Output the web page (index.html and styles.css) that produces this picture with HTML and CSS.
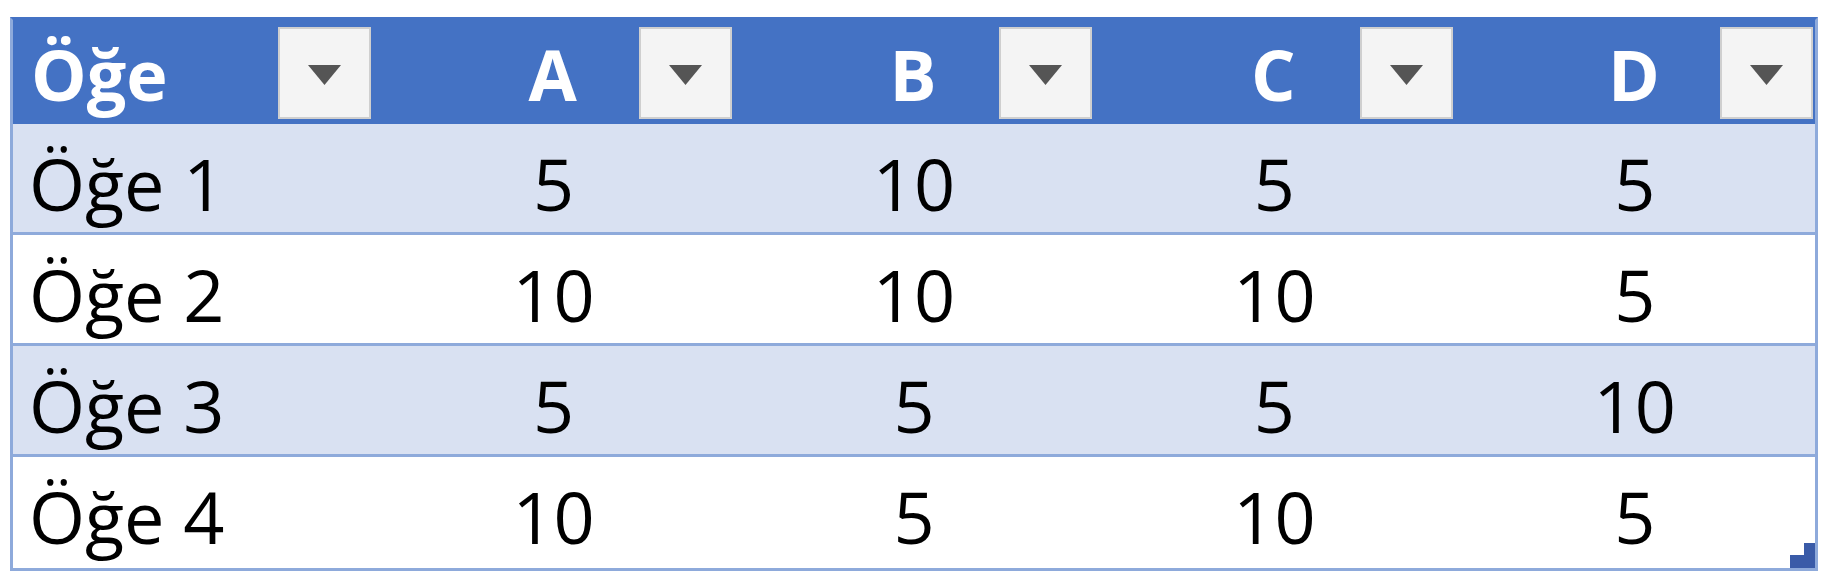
FILE: index.html
```html
<!DOCTYPE html>
<html lang="tr">
<head>
<meta charset="utf-8">
<title>Tablo</title>
<link rel="stylesheet" href="styles.css">
</head>
<body>
<div class="table">
  <div class="row head">
    <div class="hcell first"><span class="htext">Öğe</span><span class="drop"><svg viewBox="0 0 33 20" width="33" height="20"><polygon points="0,0 33,0 16.5,20" fill="#555"/></svg></span></div>
    <div class="hcell"><span></span><span class="htext">A</span><span class="drop"><svg viewBox="0 0 33 20" width="33" height="20"><polygon points="0,0 33,0 16.5,20" fill="#555"/></svg></span></div>
    <div class="hcell"><span></span><span class="htext">B</span><span class="drop"><svg viewBox="0 0 33 20" width="33" height="20"><polygon points="0,0 33,0 16.5,20" fill="#555"/></svg></span></div>
    <div class="hcell"><span></span><span class="htext">C</span><span class="drop"><svg viewBox="0 0 33 20" width="33" height="20"><polygon points="0,0 33,0 16.5,20" fill="#555"/></svg></span></div>
    <div class="hcell"><span></span><span class="htext">D</span><span class="drop"><svg viewBox="0 0 33 20" width="33" height="20"><polygon points="0,0 33,0 16.5,20" fill="#555"/></svg></span></div>
  </div>
  <div class="row band">
    <div class="cell name">Öğe 1</div><div class="cell">5</div><div class="cell">10</div><div class="cell">5</div><div class="cell">5</div>
  </div>
  <div class="row">
    <div class="cell name">Öğe 2</div><div class="cell">10</div><div class="cell">10</div><div class="cell">10</div><div class="cell">5</div>
  </div>
  <div class="row band">
    <div class="cell name">Öğe 3</div><div class="cell">5</div><div class="cell">5</div><div class="cell">5</div><div class="cell">10</div>
  </div>
  <div class="row last">
    <div class="cell name">Öğe 4</div><div class="cell">10</div><div class="cell">5</div><div class="cell">10</div><div class="cell">5</div>
  </div>
  <svg class="grip" viewBox="0 0 25 25" width="25" height="25"><polygon points="14,0 25,0 25,25 0,25 0,12 14,12" fill="#3a5ba8"/></svg>
</div>
</body>
</html>
```
FILE: styles.css
```css
html, body {
  margin: 0;
  padding: 0;
  background: #ffffff;
}

body {
  font-family: "Open Sans", "Liberation Sans", sans-serif;
}

.table {
  position: relative;
  box-sizing: border-box;
  width: 1808px;
  margin: 17px 0 0 10px;
  border: 3px solid #8eaadb;
  border-top-color: #4472c4;
}

.row {
  display: grid;
  grid-template-columns: repeat(5, 1fr);
  border-bottom: 3px solid #8eaadb;
  background: #ffffff;
}

.row.band {
  background: #d9e1f2;
}

.row.last {
  border-bottom: none;
}

.row.head {
  background: #4472c4;
  border-bottom: none;
  height: 104px;
}

.hcell {
  display: grid;
  grid-template-columns: 93px 1fr 93px;
  align-items: start;
  padding-right: 2px;
}

.hcell.first {
  grid-template-columns: 1fr 93px;
  padding-left: 18px;
}

.htext {
  color: #ffffff;
  font-weight: 700;
  font-size: 70px;
  line-height: 93px;
  padding-top: 8px;
  text-align: center;
}

.hcell.first .htext {
  text-align: left;
}

.drop {
  box-sizing: border-box;
  margin-top: 7px;
  height: 92px;
  width: 93px;
  background: #f4f4f4;
  border: 2px solid #cfcfcf;
  display: flex;
  align-items: center;
  justify-content: center;
  padding-top: 4px;
}

.cell {
  box-sizing: border-box;
  height: 108px;
  padding-top: 11px;
  line-height: 96px;
  font-size: 72px;
  color: #000000;
  text-align: center;
}

.row.last .cell {
  height: 111px;
}

.cell.name {
  text-align: left;
  padding-left: 16px;
}

.grip {
  position: absolute;
  right: 0;
  bottom: 0;
  display: block;
}
```
